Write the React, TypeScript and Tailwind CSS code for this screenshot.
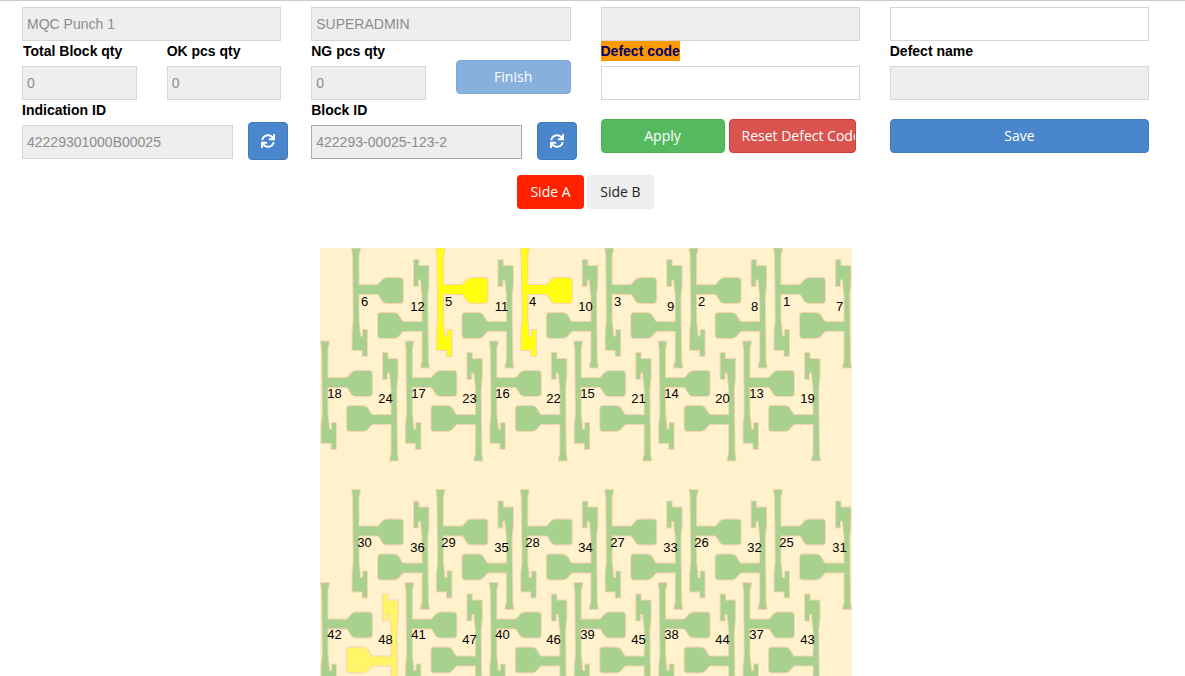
import { FC } from 'react';
import { FaSync } from 'react-icons/fa';

const PITCH = 84.4;
const PART =
  'M1,0.5 H9 L8.5,4 Q7.5,6 7.5,8 V37 H26 Q27,37 28,36 L32,31.5 Q34,30 36,30 H49 Q52,30 52,33 V52 Q52,55 49,55 H36 Q34,55 32,53.5 L28,47 Q27,46 26,46 H7.5 L7.5,72 L9,86 V88.5 H12 V82 H16 V108 H11.5 V102 H1.5 V84 L2.7,72 L2,8 L1.5,4 Z';

// six columns per row, four rows per block; x/y are relative to the picture
const blocks = [0, 241.5];
const rows = [
  { dx: 31, dy: 0, rotate: false, labels: [6, 5, 4, 3, 2, 1], lx: 44.5, ly: 52.5 },
  { dx: 110, dy: 120, rotate: true, labels: [12, 11, 10, 9, 8, 7], lx: 97.5, ly: 57.5 },
  { dx: 0, dy: 93, rotate: false, labels: [18, 17, 16, 15, 14, 13], lx: 14.5, ly: 144.5 },
  { dx: 79, dy: 213, rotate: true, labels: [24, 23, 22, 21, 20, 19], lx: 65.5, ly: 149.5 },
];
const block2Labels = [
  [30, 29, 28, 27, 26, 25],
  [36, 35, 34, 33, 32, 31],
  [42, 41, 40, 39, 38, 37],
  [48, 47, 46, 45, 44, 43],
];

const partFill = (label: number) => {
  if (label === 5 || label === 4) return '#ffff0f';
  if (label === 48) return '#fff566';
  return '#a9d18e';
};

const Field: FC<{ value?: string; disabled?: boolean; className?: string }> = ({
  value = '',
  disabled = true,
  className = '',
}) => (
  <input
    readOnly
    value={value}
    className={`h-[34px] border px-[4px] font-['Liberation_Sans',sans-serif] text-sm text-[#8c8c8c] outline-none ${
      disabled ? 'bg-[#eeeeee]' : 'bg-white'
    } ${className || 'w-full border-[#d6d6d6]'}`}
  />
);

const Label: FC<{ text: string; className?: string }> = ({ text, className = '' }) => (
  <div className={`h-5 text-sm font-bold leading-5 text-black ${className}`}>{text}</div>
);

const RefreshButton: FC = () => (
  <button className="-mt-[3px] flex h-[38px] w-10 shrink-0 items-center justify-center rounded border border-[#3f7ab9] bg-[#4a86cb] text-white">
    <FaSync size={14} />
  </button>
);

const Board: FC = () => (
  <div className="relative mx-auto mt-[39px] h-[470px] w-[532px] bg-[#fff2cc] font-['Liberation_Sans',sans-serif] text-[13px] text-black">
    <svg width="532" height="470" viewBox="0 0 532 470" className="block overflow-hidden">
      {blocks.map((by, b) =>
        rows.map((row, r) =>
          row.labels.map((label, k) => {
            const id = b === 0 ? label : block2Labels[r][k];
            return (
              <path
                key={id}
                d={PART}
                fill={partFill(id)}
                stroke="#f8d3b4"
                strokeWidth="2"
                strokeLinejoin="round"
                paintOrder="stroke"
                transform={`translate(${row.dx + PITCH * k} ${row.dy + by})${row.rotate ? ' rotate(180)' : ''}`}
              />
            );
          }),
        ),
      )}
    </svg>
    {blocks.map((by, b) =>
      rows.map((row, r) =>
        row.labels.map((label, k) => {
          const id = b === 0 ? label : block2Labels[r][k];
          return (
            <span
              key={id}
              className="absolute -translate-x-1/2 -translate-y-1/2 leading-none"
              style={{ left: Math.round(row.lx + PITCH * k), top: Math.round(row.ly + by) }}
            >
              {id}
            </span>
          );
        }),
      ),
    )}
  </div>
);

const App: FC = () => (
  <div className="h-[676px] overflow-hidden border-t border-[#cccccc] bg-white pt-[6px] font-['Liberation_Sans',sans-serif]">
    <div className="ml-[22px] w-[1127px]">
      <div className="grid grid-cols-4 gap-x-[30px] font-['Open_Sans',sans-serif]">
        {/* line info */}
        <div className="font-['Liberation_Sans',sans-serif]">
          <Field value="MQC Punch 1" />
          <div className="grid grid-cols-2 gap-x-[30px]">
            <div>
              <Label text="Total Block qty" className="pl-px" />
              <Field value="0" className="mt-[5px] w-full border-[#d6d6d6]" />
            </div>
            <div>
              <Label text="OK pcs qty" />
              <Field value="0" className="mt-[5px] w-full border-[#d6d6d6]" />
            </div>
          </div>
          <Label text="Indication ID" />
          <div className="mt-[5px] flex gap-[15px]">
            <Field value="42229301000B00025" className="w-[211px] shrink-0 border-[#d6d6d6]" />
            <RefreshButton />
          </div>
        </div>

        {/* operator */}
        <div className="font-['Liberation_Sans',sans-serif]">
          <Field value="SUPERADMIN" />
          <div className="grid grid-cols-2 gap-x-[30px]">
            <div>
              <Label text="NG pcs qty" />
              <Field value="0" className="mt-[5px] w-full border-[#d6d6d6]" />
            </div>
            <button className="mt-[19px] h-[34px] rounded border border-[#7fa9d8] bg-[#88b0dc] font-['Open_Sans',sans-serif] text-sm text-white">
              Finish
            </button>
          </div>
          <Label text="Block ID" />
          <div className="mt-[5px] flex gap-[15px]">
            <Field value="422293-00025-123-2" className="w-[211px] shrink-0 border-[#aaaaaa]" />
            <RefreshButton />
          </div>
        </div>

        {/* defect code */}
        <div>
          <Field />
          <div className="h-5 font-['Liberation_Sans',sans-serif] text-sm font-bold leading-5">
            <span className="inline-block h-5 bg-[#ff9900] text-[#000066]">Defect code</span>
          </div>
          <Field disabled={false} className="mt-[5px] w-full border-[#d6d6d6]" />
          <div className="mt-[19px] flex gap-1">
            <button className="h-[34px] w-[124px] rounded border border-[#4cae4c] bg-[#54b95f] text-sm text-white">
              Apply
            </button>
            <button className="h-[34px] w-[127px] overflow-hidden whitespace-nowrap rounded border border-[#d43f3a] bg-[#d9534f] pl-[12px] text-left text-sm text-white">
              Reset Defect Code
            </button>
          </div>
        </div>

        {/* defect name */}
        <div>
          <Field disabled={false} />
          <Label text="Defect name" className="font-['Liberation_Sans',sans-serif]" />
          <Field className="mt-[5px] w-full border-[#d6d6d6]" />
          <button className="mt-[19px] h-[34px] w-full rounded border border-[#3f7ab9] bg-[#4a86cb] text-sm text-white">
            Save
          </button>
        </div>
      </div>

      <div className="mt-[15px] flex justify-center gap-[3px] font-['Open_Sans',sans-serif] text-sm">
        <button className="h-[34px] w-[67px] rounded bg-[#ff2000] text-white">Side A</button>
        <button className="h-[34px] w-[67px] rounded bg-[#eeeeee] text-[#222222]">Side B</button>
      </div>

      <Board />
    </div>
  </div>
);

export default App;
